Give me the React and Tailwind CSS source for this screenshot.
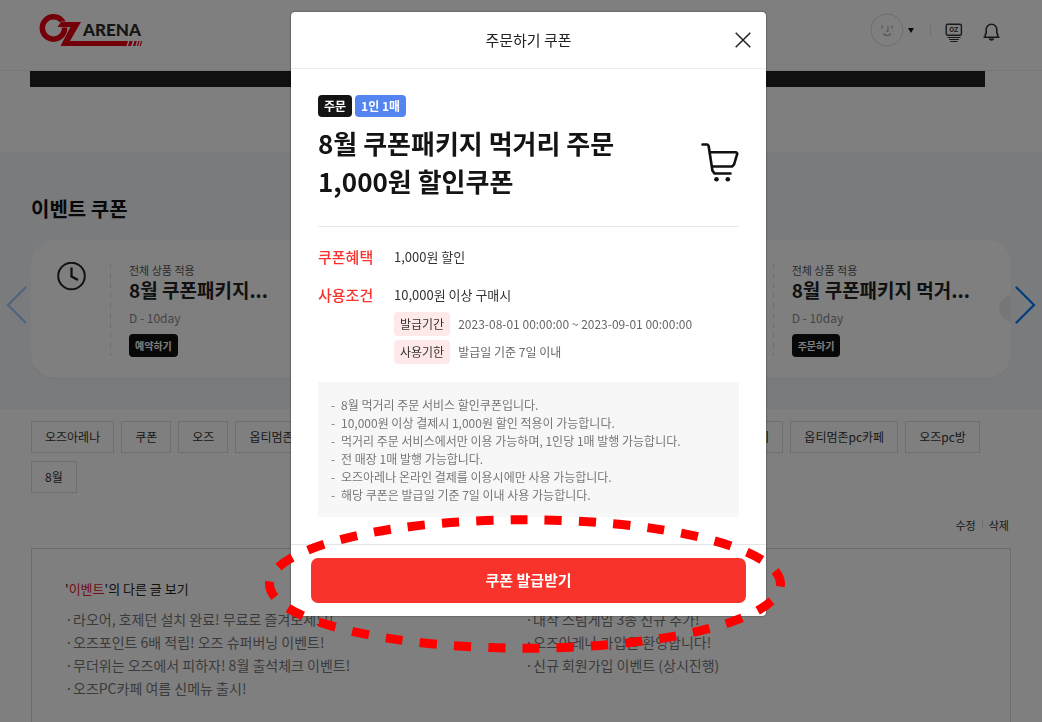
import React from 'react';

const tags = [
  '오즈아레나', '쿠폰', '오즈', '옵티멈존', '오즈아레나쿠폰', '쿠폰패키지', '먹거리주문',
  '할인쿠폰', '오즈게임 대회', '옵티멈존pc카페', '오즈pc방', '8월',
];

const coupons = [
  { id: 1, icon: 'clock', title: '8월 쿠폰패키지...', action: '예약하기' },
  { id: 2, icon: 'clock', title: '8월 쿠폰패키지...', action: '예약하기' },
  { id: 3, icon: 'cart', title: '8월 쿠폰패키지 먹거...', action: '주문하기', notch: true },
];

const postsLeft = [
  '라오어, 호제던 설치 완료! 무료로 즐겨보세요!',
  '오즈포인트 6배 적립! 오즈 슈퍼버닝 이벤트!',
  '무더위는 오즈에서 피하자! 8월 출석체크 이벤트!',
  '오즈PC카페 여름 신메뉴 출시!',
];

const postsRight = [
  '대작 스팀게임 3종 신규 추가!',
  '오즈아레나 가입을 환영합니다!',
  '신규 회원가입 이벤트 (상시진행)',
];

const notes = [
  '8월 먹거리 주문 서비스 할인쿠폰입니다.',
  '10,000원 이상 결제시 1,000원 할인 적용이 가능합니다.',
  '먹거리 주문 서비스에서만 이용 가능하며, 1인당 1매 발행 가능합니다.',
  '전 매장 1매 발행 가능합니다.',
  '오즈아레나 온라인 결제를 이용시에만 사용 가능합니다.',
  '해당 쿠폰은 발급일 기준 7일 이내 사용 가능합니다.',
];

function Logo() {
  return (
    <svg width="104" height="34" viewBox="0 0 104 34" role="img" aria-label="OZ ARENA">
      <circle cx="14.500" cy="14" r="11.200" fill="none" stroke="#e60012" strokeWidth="5.500" />
      <path d="M18.500 13L22 8H42L31 27H89L87.500 32H21.500L31.500 13Z" fill="none" stroke="#fff" strokeWidth="1" />
      <path d="M18.500 13L22 8H42L31 27H89L87.500 32H21.500L31.500 13Z" fill="#e60012" />
      <path d="M90.500 27h3.200l-1.500 5h-3.200z M95.500 27h2.300l-1.500 5h-2.300z M99.300 27h1.300l-1.500 5h-1.300z M102 27h1.200l-1.500 5h-1.200z" fill="#e60012" />
      <text x="44" y="21.500" fontFamily="Lato, sans-serif" fontWeight="900" fontSize="17" fill="#2b2b2b">ARENA</text>
    </svg>
  );
}

function Clock() {
  return (
    <svg width="30" height="30" viewBox="0 0 30 30" fill="none" stroke="#222" strokeWidth="2" aria-hidden="true">
      <circle cx="14.500" cy="14" r="13.300" />
      <path d="M14.500 5.500V14.500L21 18" strokeWidth="2.300" />
    </svg>
  );
}

function Cart({ className }) {
  return (
    <svg className={className} viewBox="0 0 38 40" fill="none" stroke="#111" strokeWidth="2.600" strokeLinecap="round" strokeLinejoin="round" aria-hidden="true">
      <path d="M1.500 2.500H6.500L7.600 3.800L11.400 28.500L13.500 31.500H29.500" />
      <path d="M9 10.200H35.200L36.300 11.600L33 22.600L31 24.500H11.600" />
      <circle cx="15.500" cy="37.300" r="2.300" fill="#111" stroke="none" />
      <circle cx="26.800" cy="37.300" r="2.300" fill="#111" stroke="none" />
    </svg>
  );
}

function Header() {
  return (
    <header className="flex h-[71px] items-start justify-between border-b border-[#eee] pl-[39px] pr-[42px]">
      <a href="#home" className="mt-[14px] block"><Logo /></a>
      <div className="mt-[13px] flex h-[34px] items-center">
        <button type="button" aria-label="내 프로필" className="flex items-center gap-1">
          <svg width="34" height="34" viewBox="0 0 34 34" fill="none" stroke="#b4b4b4" aria-hidden="true">
            <circle cx="17" cy="17" r="16" stroke="#dadada" />
            <path d="M12.200 12.500v3M22 12.500v3" strokeWidth="1.400" />
            <path d="M18 13v5.300h-2" strokeWidth="1.200" />
            <path d="M13.500 20.500c1.800 2.700 5.600 2.700 7.400 0" strokeWidth="1.400" />
          </svg>
          <svg width="6" height="5" viewBox="0 0 6 5" aria-hidden="true"><path d="M0 0H6L3 5Z" fill="#111" /></svg>
        </button>
        <span className="ml-4 h-3 w-px bg-[#e5e5e5]" />
        <a href="#oz" aria-label="OZ" className="ml-[14px] mt-1 block">
          <svg width="18" height="19" viewBox="0 0 18 19" fill="none" stroke="#333" aria-hidden="true">
            <rect x="1.200" y="1.200" width="15.200" height="11" rx="1.500" strokeWidth="1.400" />
            <path d="M2.500 14.500h13M4 16.500h10M5.500 18.500h7" />
            <text x="8.800" y="9.300" textAnchor="middle" fontFamily="Roboto, sans-serif" fontWeight="700" fontSize="7" fill="#333" stroke="none">OZ</text>
          </svg>
        </a>
        <button type="button" aria-label="알림" className="ml-5 mt-[3px]">
          <svg width="17" height="18" viewBox="0 0 17 18" fill="none" stroke="#333" strokeWidth="1.600" aria-hidden="true">
            <path d="M.5 14.300H16.500M2.300 14.300V11.500L3.200 10V6.500a5.300 5.300 0 0 1 10.600 0V10L14.700 11.500V14.300" />
            <path d="M6.500 15.500c.5 2 3.500 2 4 0" fill="#333" />
          </svg>
        </button>
      </div>
    </header>
  );
}

function CouponCard({ coupon }) {
  return (
    <li className="relative flex h-[138px] overflow-hidden rounded-[24px] bg-white pt-[22px] shadow-[0_1px_1px_rgba(0,0,0,0.05)]">
      <div className="w-[79px] shrink-0 pl-[26px]">
        {coupon.icon === 'clock' ? <Clock /> : <Cart className="h-[30px] w-[30px]" />}
      </div>
      <svg className="h-[94px] w-px shrink-0" aria-hidden="true">
        <line x1="0.5" y1="1" x2="0.5" y2="94" stroke="#ddd" strokeDasharray="5 5" />
      </svg>
      <div className="pl-[18px]">
        <p className="text-[11px] leading-4 text-[#555]">전체 상품 적용</p>
        <h3 className="whitespace-nowrap text-[19px] font-bold leading-6 text-[#222]">{coupon.title}</h3>
        <p className="mt-2 text-[12px] leading-4 text-[#888]">D - 10day</p>
        <button type="button" className="mt-2 block h-[23px] rounded-[4px] bg-[#111] px-[6px] text-[10px] font-bold text-white">{coupon.action}</button>
      </div>
      {coupon.notch && <span className="absolute -right-[15px] top-[55px] h-[27px] w-[27px] rounded-full bg-[#eee]" />}
    </li>
  );
}

function PostList({ posts }) {
  return (
    <ul>
      {posts.map((p) => (
        <li key={p}><a href="#post" className="flex"><span className="w-2">·</span>{p}</a></li>
      ))}
    </ul>
  );
}

function Page() {
  return (
    <div>
      <Header />
      <div className="ml-[30px] mr-[57px] h-4 bg-[#202020]" />
      <section className="mt-[65px] h-[257px] bg-[#f3f6fa] px-[31px] pt-[42px]">
        <h2 className="text-[20px] font-bold leading-[30px] text-[#111]">이벤트 쿠폰</h2>
        <div className="relative mt-4">
          <ul className="grid grid-cols-3 gap-[14px]">
            {coupons.map((c) => <CouponCard key={c.id} coupon={c} />)}
          </ul>
          <button type="button" aria-label="이전" className="absolute -left-[25px] top-[46px] opacity-[0.35]">
            <svg width="21" height="38" viewBox="0 0 21 38" fill="none" stroke="#007aff" strokeWidth="2.200" strokeLinecap="round"><path d="M19.500 1.500L2 19L19.500 36.500" /></svg>
          </button>
          <button type="button" aria-label="다음" className="absolute -right-[25px] top-[46px]">
            <svg width="21" height="38" viewBox="0 0 21 38" fill="none" stroke="#007aff" strokeWidth="2.200" strokeLinecap="round"><path d="M1.500 1.500L19 19L1.500 36.500" /></svg>
          </button>
        </div>
      </section>
      <div className="px-[31px] pt-3">
        <nav className="flex flex-wrap gap-x-[7px] gap-y-2" aria-label="태그">
          {tags.map((t) => (
            <a key={t} href="#tag" className="h-8 border border-[#dcdcdc] px-[13px] text-[12px] leading-[30px] text-[#333]">{t}</a>
          ))}
        </nav>
        <div className="mt-6 flex items-center justify-end gap-[6px] pr-[2px] text-[11px] leading-4 text-[#333]">
          <button type="button">수정</button>
          <span className="h-2 w-px bg-[#ddd]" />
          <button type="button">삭제</button>
        </div>
        <section className="mt-[15px] h-[260px] border border-[#d8d8d8] px-[33px] pt-[30px]">
          <h2 className="text-[13px] leading-5 text-[#222]">'<span className="text-[#e8202a]">이벤트</span>'의 다른 글 보기</h2>
          <div className="mt-[9px] grid grid-cols-2 gap-x-2 text-[14px] leading-[23px] text-[#777]">
            <PostList posts={postsLeft} />
            <PostList posts={postsRight} />
          </div>
        </section>
      </div>
    </div>
  );
}

function CouponDialog() {
  return (
    <div role="dialog" aria-modal="true" aria-labelledby="dialog-title" className="relative w-[475px] rounded-[4px] bg-white shadow-[0_0_2px_rgba(0,0,0,0.6)]">
      <div className="flex h-[57px] items-center border-b border-[#ececec] px-[15px]">
        <span className="w-4" />
        <h1 id="dialog-title" className="flex-1 text-center text-[15px] text-[#222]">주문하기 쿠폰</h1>
        <button type="button" aria-label="닫기">
          <svg width="16" height="16" viewBox="0 0 16 16" stroke="#222" strokeWidth="1.500"><path d="M.7 .7L15.300 15.300M15.300 .7L.7 15.300" /></svg>
        </button>
      </div>
      <div className="px-[27px] pt-[26px]">
        <div className="flex items-center justify-between border-b border-[#e8e8e8] pb-[26px]">
          <div>
            <div className="flex gap-[3px] text-[12px] font-bold leading-[22px] text-white">
              <span className="rounded-[4px] bg-[#141414] px-[6px]">주문</span>
              <span className="rounded-[4px] bg-[#5484ef] px-[6px]">1인 1매</span>
            </div>
            <h2 className="mt-[7px] text-[26px] font-bold leading-[38px] text-[#141414]">
              8월 쿠폰패키지 먹거리 주문<br />1,000원 할인쿠폰
            </h2>
          </div>
          <Cart className="mt-7 h-10 w-[38px]" />
        </div>
        <dl className="mt-[18px] grid grid-cols-[76px_1fr] gap-y-[14px] leading-6">
          <dt className="text-[15px] font-medium text-[#f8332d]">쿠폰혜택</dt>
          <dd className="text-[13px] text-[#333]">1,000원 할인</dd>
          <dt className="text-[15px] font-medium text-[#f8332d]">사용조건</dt>
          <dd className="text-[13px] text-[#333]">
            10,000원 이상 구매시
            <div className="mt-[5px] flex flex-col gap-1 text-[12px]">
              <p className="flex gap-2"><span className="rounded-[4px] bg-[#fee9e8] px-[6px]">발급기간</span><span className="text-[#666]">2023-08-01 00:00:00 ~ 2023-09-01 00:00:00</span></p>
              <p className="flex gap-2"><span className="rounded-[4px] bg-[#fee9e8] px-[6px]">사용기한</span><span className="text-[#666]">발급일 기준 7일 이내</span></p>
            </div>
          </dd>
        </dl>
        <ul className="mt-[18px] bg-[#f7f7f7] px-[13px] pb-[13px] pt-[14px] text-[12px] leading-[18px] text-[#777]">
          {notes.map((n) => <li key={n} className="flex"><span className="w-[10px]">-</span>{n}</li>)}
        </ul>
      </div>
      <div className="mt-[27px] border-t border-[#e2e6ea] px-5 py-[13px]">
        <button type="button" className="block h-[45px] w-full rounded-[7px] bg-[#f7332b] text-[15px] font-bold text-white">쿠폰 발급받기</button>
      </div>
      <svg className="pointer-events-none absolute -left-[26px] bottom-[-37px]" width="520" height="138" viewBox="0 0 520 138" fill="none" aria-hidden="true">
        <path d="M4.500 69A255.500 64.300 0 0 0 515.500 69A255.500 64.300 0 0 0 4.500 69Z" stroke="#f00" strokeWidth="9" pathLength="64" strokeDasharray="1 1" strokeDashoffset="0.150" />
      </svg>
    </div>
  );
}

export default function App() {
  return (
    <div className="h-screen overflow-hidden bg-white font-['Noto_Sans_CJK_KR','Noto_Sans',sans-serif]">
      <Page />
      <div className="fixed inset-0 flex items-start justify-center bg-black/50 pl-[15px] pt-3">
        <CouponDialog />
      </div>
    </div>
  );
}
